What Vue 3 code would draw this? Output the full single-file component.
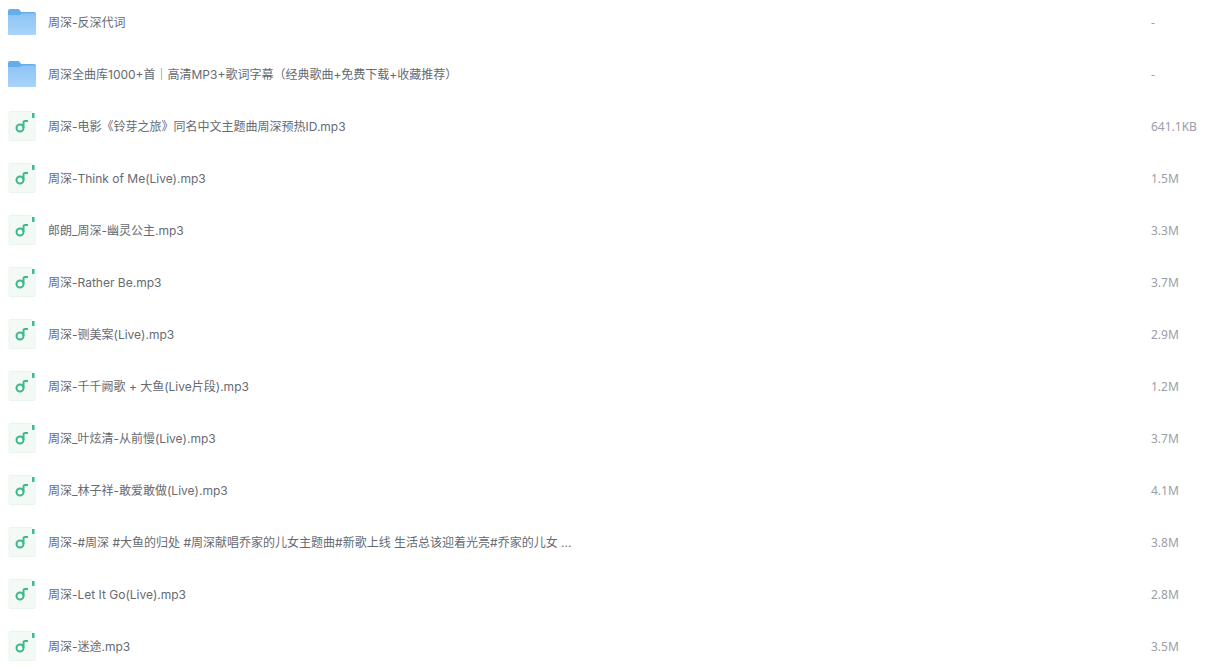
<script setup>
const files = [
  { name: '周深-反深代词', size: '-', folder: true },
  { name: '周深全曲库1000+首｜高清MP3+歌词字幕（经典歌曲+免费下载+收藏推荐）', size: '-', folder: true },
  { name: '周深-电影《铃芽之旅》同名中文主题曲周深预热ID.mp3', size: '641.1KB' },
  { name: '周深-Think of Me(Live).mp3', size: '1.5M' },
  { name: '郎朗_周深-幽灵公主.mp3', size: '3.3M' },
  { name: '周深-Rather Be.mp3', size: '3.7M' },
  { name: '周深-铡美案(Live).mp3', size: '2.9M' },
  { name: '周深-千千阙歌 + 大鱼(Live片段).mp3', size: '1.2M' },
  { name: '周深_叶炫清-从前慢(Live).mp3', size: '3.7M' },
  { name: '周深_林子祥-敢爱敢做(Live).mp3', size: '4.1M' },
  { name: '周深-#周深 #大鱼的归处 #周深献唱乔家的儿女主题曲#新歌上线 生活总该迎着光亮#乔家的儿女 ...', size: '3.8M' },
  { name: '周深-Let It Go(Live).mp3', size: '2.8M' },
  { name: '周深-迷途.mp3', size: '3.5M' }
]
</script>

<template>
  <div class="list">
    <div class="row" v-for="file in files" :key="file.name">
      <svg v-if="file.folder" class="icon" width="30" height="28" viewBox="0 0 30 28">
        <defs>
          <linearGradient id="folderFill" x1="0" y1="0" x2="0" y2="1">
            <stop offset="0" stop-color="#8cc4f5" />
            <stop offset="1" stop-color="#a9d4fa" />
          </linearGradient>
        </defs>
        <path d="M1 3 Q1 1 3 1 H11 Q12.500 1 13.500 3 L14 4 H27 Q29 4 29 6 V10 H1 Z" fill="#65aeec" />
        <path d="M1 7 H13 L15 5.500 H27.500 Q29 5.500 29 7 V26 Q29 27 28 27 H2 Q1 27 1 26 Z" fill="url(#folderFill)" />
      </svg>
      <svg v-else class="icon" width="30" height="30" viewBox="0 0 30 30">
        <path d="M3 0.500 H24 L28 4.500 V28.500 Q28 29.500 27 29.500 H3 Q2 29.500 2 28.500 V1.500 Q2 0.500 3 0.500 Z" fill="#f3faf6" stroke="#e4f1ea" stroke-width="0.800" />
        <rect x="25" y="2" width="2.500" height="5" fill="#3cc08a" />
        <circle cx="13" cy="17" r="3.500" fill="none" stroke="#3cb98a" stroke-width="2" />
        <path d="M16.500 17 V11.500 Q16.500 10 18 10 H21" fill="none" stroke="#3cb98a" stroke-width="2" />
      </svg>
      <span class="name">{{ file.name }}</span>
      <span class="size">{{ file.size }}</span>
    </div>
  </div>
</template>

<style scoped>
.list {
  display: flex;
  flex-direction: column;
  margin-top: -4px;
  font-family: Inter, "Noto Sans CJK SC", sans-serif;
  font-size: 12px;
}

.row {
  display: flex;
  align-items: center;
  height: 52px;
  padding-left: 7px;
  flex-shrink: 0;
}

.icon {
  width: 30px;
  flex-shrink: 0;
}

.name {
  margin-left: 11px;
  margin-bottom: 2px;
  width: 1103px;
  flex-shrink: 0;
  color: #666a72;
  white-space: nowrap;
}

.size {
  font-family: "Noto Sans", sans-serif;
  color: #9a9ea8;
}
</style>

<style>
html, body {
  background: #fff;
  overflow: hidden;
}
</style>
